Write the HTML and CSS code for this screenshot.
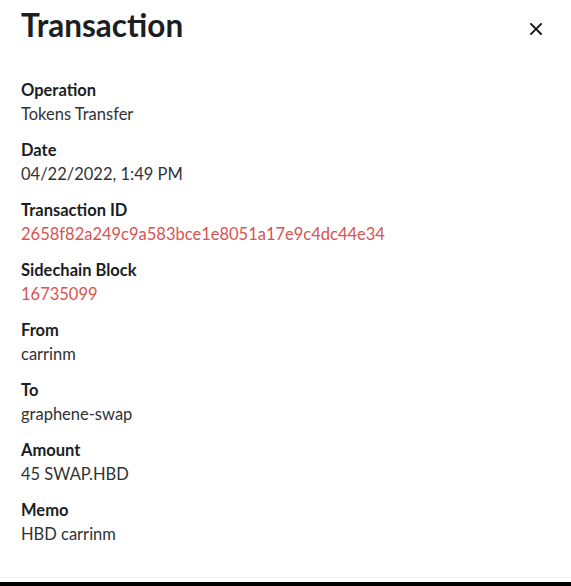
FILE: index.html
```html
<!DOCTYPE html>
<html lang="en">
<head>
<meta charset="utf-8">
<title>Transaction</title>
<link rel="stylesheet" href="styles.css">
</head>
<body>
<div class="modal">
  <header class="modal-header">
    <h1 class="modal-title">Transaction</h1>
    <button class="close-btn" aria-label="Close">
      <svg width="12" height="12" viewBox="0 0 12 12"><path d="M1 1L11 11M11 1L1 11" stroke="#111" stroke-width="1.8" stroke-linecap="square"/></svg>
    </button>
  </header>
  <dl class="details">
    <div class="item"><dt>Operation</dt><dd>Tokens Transfer</dd></div>
    <div class="item"><dt>Date</dt><dd>04/22/2022, 1:49 PM</dd></div>
    <div class="item"><dt>Transaction ID</dt><dd class="link">2658f82a249c9a583bce1e8051a17e9c4dc44e34</dd></div>
    <div class="item"><dt>Sidechain Block</dt><dd class="link">16735099</dd></div>
    <div class="item"><dt>From</dt><dd>carrinm</dd></div>
    <div class="item"><dt>To</dt><dd>graphene-swap</dd></div>
    <div class="item"><dt>Amount</dt><dd>45 SWAP.HBD</dd></div>
    <div class="item"><dt>Memo</dt><dd>HBD carrinm</dd></div>
  </dl>
</div>
<div class="bottom-edge"></div>
</body>
</html>
```
FILE: styles.css
```css
html, body {
  margin: 0;
  padding: 0;
  height: 100%;
}
body {
  display: flex;
  flex-direction: column;
  background: #fff;
  font-family: Lato, "Open Sans", sans-serif;
  color: #212529;
}
.modal {
  flex: 1;
  padding: 4px 21px 0 21px;
  border-bottom: 1px solid #eee;
  margin-bottom: 4px;
}
.modal-header {
  display: flex;
  align-items: center;
  justify-content: space-between;
  height: 42px;
}
.modal-title {
  margin: 0;
  font-size: 31.5px;
  font-weight: 700;
  color: #1b1e22;
  line-height: 42px;
}
.close-btn {
  background: none;
  border: 0;
  padding: 0;
  margin-right: 7px;
  margin-top: 8px;
  width: 14px;
  height: 14px;
  display: flex;
  align-items: center;
  justify-content: center;
}
.details {
  margin: 32px 0 0 0;
  display: flex;
  flex-direction: column;
  gap: 12px;
}
.item dt {
  font-weight: 700;
  font-size: 16.5px;
  line-height: 24px;
  color: #1b1e22;
}
.item dd {
  margin: 0;
  font-size: 16.5px;
  line-height: 24px;
  color: #2f3236;
}
.item dd.link {
  color: #d9534f;
}
.bottom-edge {
  height: 4px;
  background: #000;
}
```
